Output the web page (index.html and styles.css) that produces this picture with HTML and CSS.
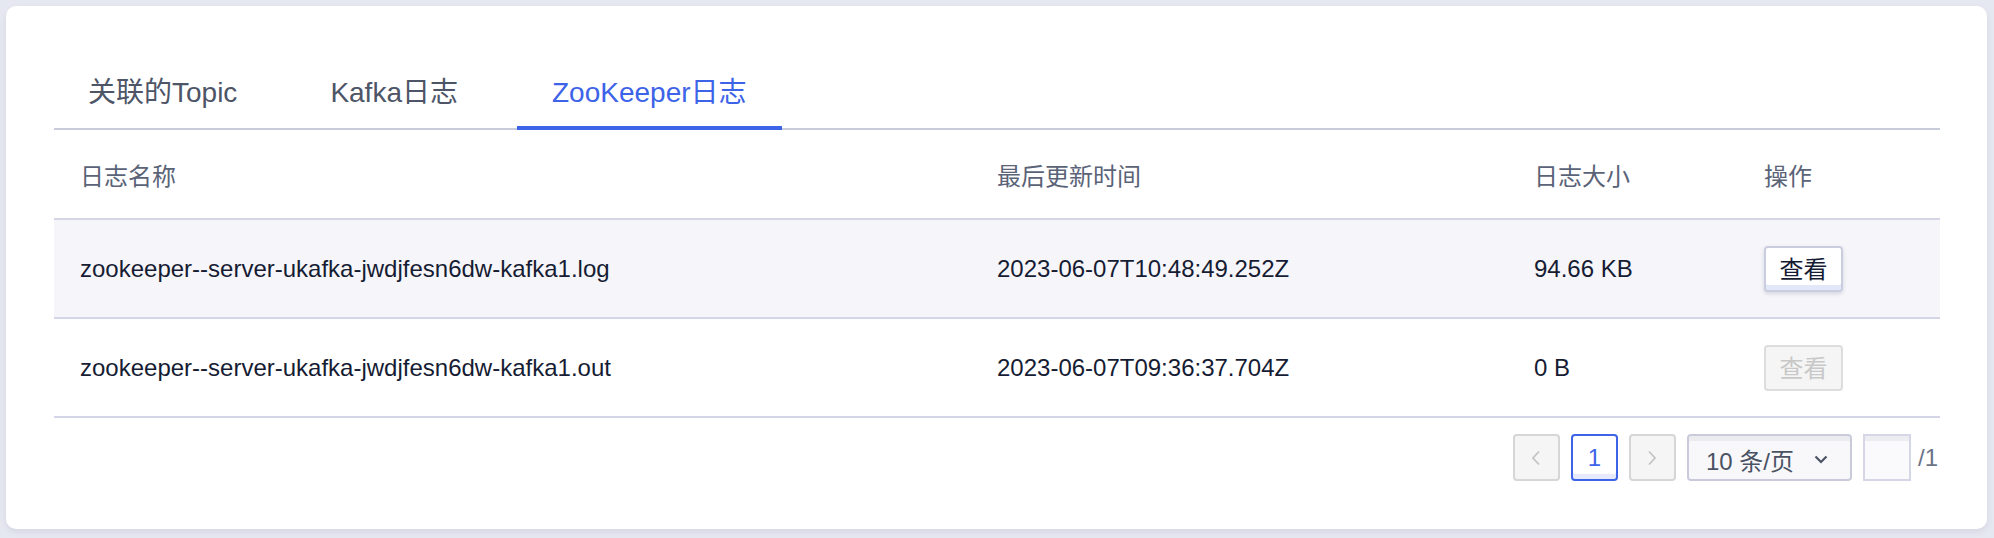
FILE: index.html
```html
<!DOCTYPE html>
<html lang="zh-CN">
<head>
<meta charset="utf-8">
<title>ZooKeeper日志</title>
<link rel="stylesheet" href="styles.css">
</head>
<body>
<div class="card">
  <div class="tabs">
    <div class="tab">关联的Topic</div>
    <div class="tab">Kafka日志</div>
    <div class="tab active">ZooKeeper日志</div>
  </div>
  <div class="table">
    <div class="row head">
      <div class="cell">日志名称</div>
      <div class="cell">最后更新时间</div>
      <div class="cell">日志大小</div>
      <div class="cell op">操作</div>
    </div>
    <div class="row body hover">
      <div class="cell">zookeeper--server-ukafka-jwdjfesn6dw-kafka1.log</div>
      <div class="cell">2023-06-07T10:48:49.252Z</div>
      <div class="cell">94.66 KB</div>
      <div class="cell op"><button class="btn">查看</button></div>
    </div>
    <div class="row body">
      <div class="cell">zookeeper--server-ukafka-jwdjfesn6dw-kafka1.out</div>
      <div class="cell">2023-06-07T09:36:37.704Z</div>
      <div class="cell">0 B</div>
      <div class="cell op"><button class="btn disabled" disabled>查看</button></div>
    </div>
  </div>
  <div class="pager">
    <div class="pbox nav">
      <svg width="10" height="16" viewBox="0 0 10 16"><path d="M8 1.5 L2 8 L8 14.5" fill="none" stroke="#c4c4c4" stroke-width="1.8"/></svg>
    </div>
    <div class="pbox current">1</div>
    <div class="pbox nav">
      <svg width="10" height="16" viewBox="0 0 10 16"><path d="M2 1.5 L8 8 L2 14.5" fill="none" stroke="#c4c4c4" stroke-width="1.8"/></svg>
    </div>
    <div class="select">
      <span>10 条/页</span>
      <svg width="14" height="9" viewBox="0 0 14 9"><path d="M1.5 1.5 L7 7 L12.5 1.5" fill="none" stroke="#4a5263" stroke-width="2.2"/></svg>
    </div>
    <div class="jump"></div>
    <span class="total">/1</span>
  </div>
</div>
</body>
</html>
```
FILE: styles.css
```css
html, body {
  margin: 0;
  padding: 0;
}
body {
  background: #e6e8f1;
  padding: 6px 7px 9px 6px;
  font-family: "Liberation Sans", "Noto Sans CJK SC", sans-serif;
}
.card {
  box-sizing: border-box;
  width: 1981px;
  height: 523px;
  background: #ffffff;
  border-radius: 10px;
  box-shadow: 0 3px 6px rgba(60, 70, 110, 0.10);
  padding: 0 47px 0 48px;
}
.tabs {
  display: flex;
  gap: 25px;
  padding-top: 67px;
  border-bottom: 2px solid #c8cbd9;
}
.tab {
  font-size: 28px;
  line-height: 40px;
  padding: 0 34px 13px;
  color: #4d5567;
  border-bottom: 4px solid transparent;
  margin-bottom: -2px;
  white-space: nowrap;
}
.tab.active {
  color: #3d63e8;
  border-bottom-color: #3d63e8;
  padding: 0 35px 13px;
}
.row {
  display: grid;
  grid-template-columns: 917px 537px 230px 1fr;
  align-items: center;
  border-bottom: 2px solid #d4d6e8;
}
.row.head {
  height: 88px;
}
.row.body {
  height: 97px;
}
.row.hover {
  background: #f6f6fa;
}
.cell {
  padding-left: 26px;
  font-size: 24px;
  color: #161c33;
  white-space: nowrap;
}
.head .cell {
  color: #5a6377;
}
.cell.op {
  padding-left: 26px;
}
.btn {
  box-sizing: border-box;
  width: 79px;
  height: 46px;
  padding: 0 0 3px;
  font-family: "Liberation Sans", "Noto Sans CJK SC", sans-serif;
  font-size: 24px;
  color: #161c33;
  background: #ffffff;
  border: 2px solid #c9cddf;
  border-radius: 4px;
  box-shadow: inset 0 -5px 0 #e3e8f8, 0 2px 4px rgba(40, 50, 90, 0.16);
}
.btn.disabled {
  color: #c8c8c8;
  background: #f5f5f5;
  border-color: #dddddd;
  box-shadow: none;
}
.pager {
  display: flex;
  justify-content: flex-end;
  align-items: center;
  margin-top: 16px;
  margin-right: 2px;
  gap: 11px;
}
.pbox {
  box-sizing: border-box;
  width: 47px;
  height: 47px;
  border-radius: 4px;
  display: flex;
  align-items: center;
  justify-content: center;
  font-size: 24px;
}
.pbox.nav {
  background: #f5f5f5;
  border: 2px solid #d6d6d6;
}
.pbox.current {
  background: #ffffff;
  border: 2px solid #3d63e8;
  color: #3d63e8;
  box-shadow: inset 0 -5px 0 #e6eafb;
}
.select {
  box-sizing: border-box;
  width: 165px;
  height: 47px;
  border: 2px solid #c9cbda;
  border-radius: 4px;
  background: #f8f8fb;
  box-shadow: inset 0 5px 0 #ececf0;
  display: flex;
  align-items: center;
  justify-content: space-between;
  padding: 3px 22px 0 17px;
  font-size: 24px;
  color: #4a5263;
}
.jump {
  box-sizing: border-box;
  width: 48px;
  height: 47px;
  border: 2px solid #d5d7e7;
  background: #fafafc;
  box-shadow: inset 0 5px 0 #ededf1;
}
.total {
  margin-left: -4px;
  font-size: 24px;
  color: #6b7488;
}
```
